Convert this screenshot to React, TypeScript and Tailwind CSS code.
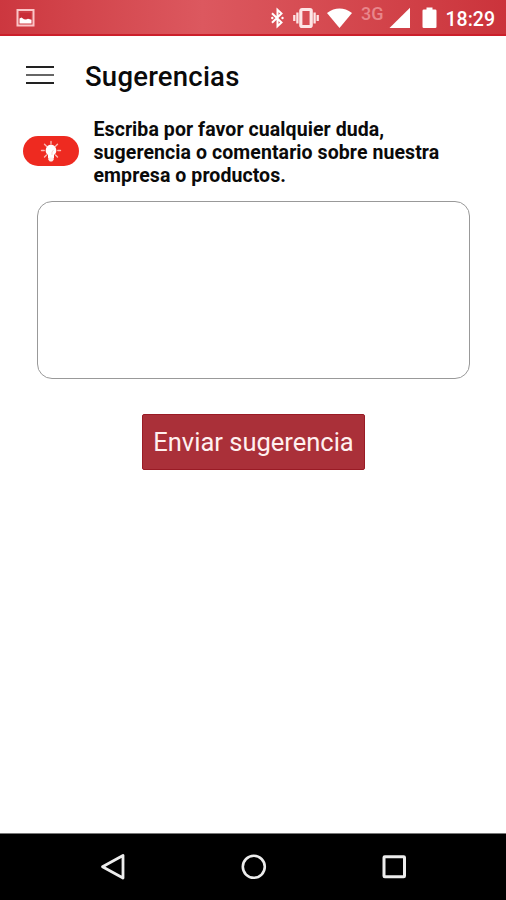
function StatusBar() {
  return (
    <header className="flex h-[36px] shrink-0 items-start border-b-2 border-[#cc1f2b] bg-linear-to-r from-[#cc373f] via-[#dc585f] via-40% to-[#cb333b] pl-4 text-white">
      <svg className="mt-[8px] h-[19px] w-[19px] shrink-0" viewBox="0 0 19 19" fill="none">
        <rect x="1.5" y="2" width="16" height="15.5" stroke="#fbc5c7" strokeWidth="2" />
        <path d="M4 5h11v7H4Z" fill="#c92d37" />
        <path d="M3.500 15.500V10.500l2-1 2.500 1.700 2 .3 2-.7 3.500 1v3.700Z" fill="#fff" />
      </svg>
      <svg className="mt-[7px] ml-[235px] h-[22px] w-[15px] shrink-0" viewBox="0 0 15 22" fill="none" stroke="#fff" strokeWidth="2">
        <path d="M2 6.200 11.500 15.500 7.500 19.200V2.800L11.500 6.500 2 15.800" />
        <circle cx="2.300" cy="11" r="1.200" fill="#fff" stroke="none" />
        <circle cx="12.500" cy="11" r="1.200" fill="#fff" stroke="none" />
      </svg>
      <svg className="mt-[7px] ml-[8px] h-[22px] w-[26px] shrink-0" viewBox="0 0 26 22" fill="none" stroke="#fde5e5" strokeWidth="2.300">
        <rect x="7.800" y="2.500" width="10.400" height="17" rx="1.200" strokeWidth="3.200" />
        <path d="M4.400 5.500v11M21.600 5.500v11M1.300 8v6M24.700 8v6" />
      </svg>
      <svg className="mt-[7px] ml-[7px] h-[22px] w-[27px] shrink-0" viewBox="0 0 27 22">
        <path d="M1 6Q13.5-2.8 26 6L13.5 21Z" fill="#fff" />
      </svg>
      <span className="mt-[4px] ml-[8px] w-[24px] text-[18px] leading-[20px] font-medium text-[#e8868b]">3G</span>
      <svg className="mt-[7px] ml-[4px] h-[22px] w-[22px] shrink-0" viewBox="0 0 22 22">
        <path d="M21 .8V21H.5Z" fill="#fff" />
      </svg>
      <svg className="mt-[7px] ml-[11px] h-[22px] w-[15px] shrink-0" viewBox="0 0 15 22">
        <path d="M4.5.5h6v2h2.7q1.3 0 1.3 1.3v15.9q0 1.3-1.3 1.3H1.8Q.5 21 .5 19.700V3.800Q.5 2.500 1.800 2.500h2.700Z" fill="#fff" />
      </svg>
      <span className="mt-[9px] ml-[8.500px] text-[19.500px] leading-[22px] font-medium whitespace-nowrap">18:29</span>
    </header>
  );
}

function IdeaBadge() {
  return (
    <div className="mt-[18px] flex h-[30px] w-[56px] shrink-0 items-center justify-center rounded-full bg-[#ee2a20]">
      <svg className="h-[24px] w-[22px]" viewBox="0 0 22 24" fill="none">
        <g stroke="#fbb9b2" strokeWidth="1.4" strokeLinecap="round">
          <path d="M11 2.500v2M4.500 5.200l2 2M17.500 5.200l-2 2M1.500 11.500h2.700M17.800 11.500h2.700M4.500 18l2-2M17.500 18l-2-2" />
        </g>
        <path d="M11 5.500a5.800 5.800 0 0 0-3 10.400v3.100h6v-3.100a5.800 5.800 0 0 0-3-10.400Z" fill="#fff" />
        <path d="M8.300 18.500h5.400v2.300l-1.500 1.700H9.800L8.300 20.800Z" fill="#ffebe9" />
        <path d="M12 16v-3l1.500-2" stroke="#f7bbb6" strokeWidth=".7" />
      </svg>
    </div>
  );
}

function NavigationBar() {
  return (
    <nav className="flex h-[67px] shrink-0 items-center justify-between border-t border-[#777] bg-black pr-[98px] pl-[99px] text-[#ededed]">
      <button aria-label="Atrás">
        <svg className="h-[28px] w-[28px]" viewBox="0 0 28 28" fill="none" stroke="currentColor" strokeWidth="2.800" strokeLinejoin="round">
          <path d="M24 2.500v22.500L3.500 13.700Z" />
        </svg>
      </button>
      <button aria-label="Inicio">
        <svg className="h-[28px] w-[28px]" viewBox="0 0 28 28" fill="none" stroke="currentColor" strokeWidth="2.600">
          <circle cx="13.800" cy="13.800" r="11" />
        </svg>
      </button>
      <button aria-label="Recientes">
        <svg className="h-[28px] w-[28px]" viewBox="0 0 28 28" fill="none" stroke="currentColor" strokeWidth="3">
          <rect x="4" y="3.700" width="20.500" height="20" rx=".8" />
        </svg>
      </button>
    </nav>
  );
}

export default function App() {
  return (
    <div className="flex h-[900px] w-[506px] flex-col overflow-hidden bg-white font-['Roboto',sans-serif] text-[#0a0a0a]">
      <StatusBar />
      <main className="flex grow flex-col">
        <div className="flex h-[82px] items-center pl-[26px]">
          <button aria-label="Menú" className="mb-[5px] flex w-[28px] flex-col gap-[6px]">
            <span className="h-[2px] bg-[#222]" />
            <span className="h-[2px] bg-[#666]" />
            <span className="h-[2px] bg-[#222]" />
          </button>
          <h1 className="ml-[31px] text-[27.500px] leading-[32px] font-medium tracking-[0.220px]">Sugerencias</h1>
        </div>
        <div className="flex pl-[23px]">
          <IdeaBadge />
          <p className="ml-[14.500px] text-[19.500px] leading-[23px] font-bold tracking-[0.080px] whitespace-nowrap">
            Escriba por favor cualquier duda,
            <br />
            sugerencia o comentario sobre nuestra
            <br />
            empresa o productos.
          </p>
        </div>
        <textarea aria-label="Sugerencia" className="mt-[14px] ml-[37px] h-[178px] w-[433px] resize-none rounded-[15px] border-[1.500px] border-[#999] p-3 outline-none" />
        <button className="mt-[35px] ml-[142px] h-[56px] w-[223px] rounded-[2px] border border-[#991b25] bg-[#aa3039] pt-[1px] text-[25.500px] whitespace-nowrap text-[#fff0ef]">
          Enviar sugerencia
        </button>
      </main>
      <NavigationBar />
    </div>
  );
}
